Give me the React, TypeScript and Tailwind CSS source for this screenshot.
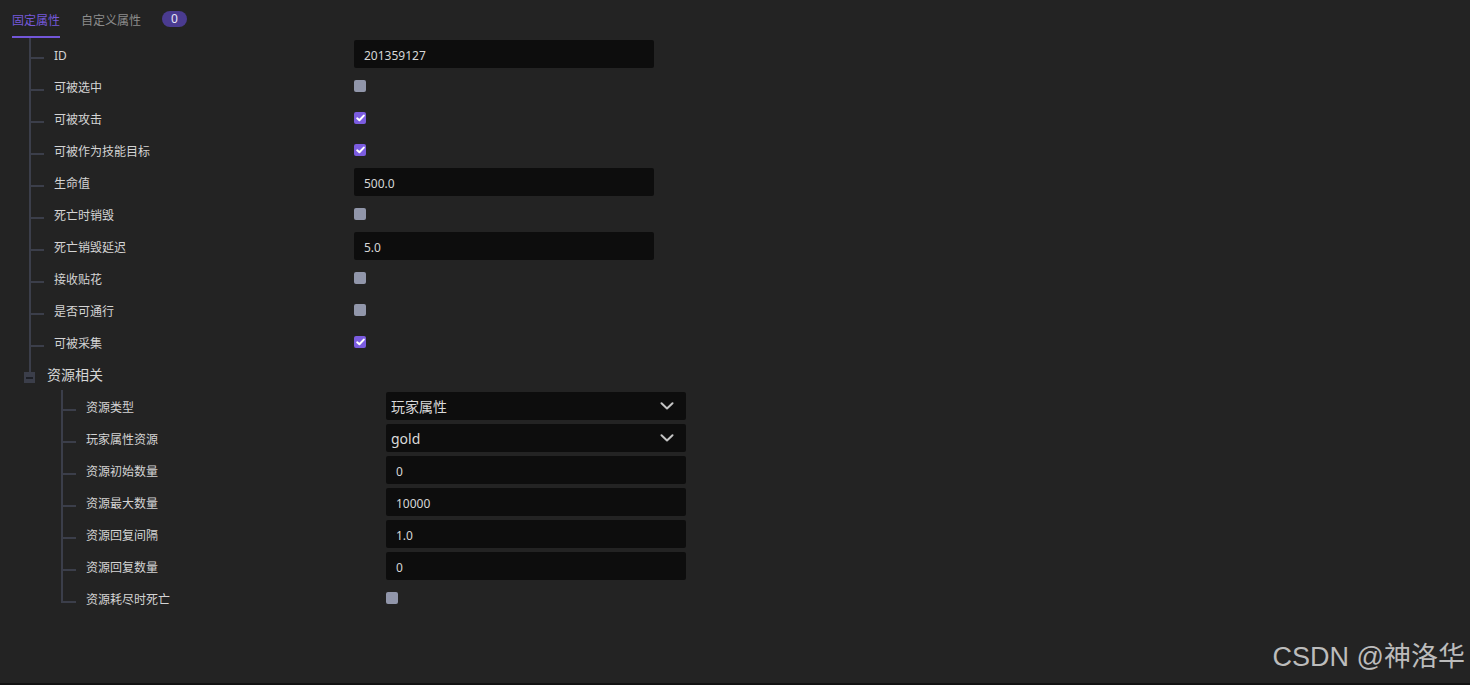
import React from "react"

const LINE = "border-[#3b3e4a]"

type Field =
  | { label: string; kind: "input"; value: string }
  | { label: string; kind: "check"; checked: boolean }
  | { label: string; kind: "select"; value: string }

const fixedFields: Field[] = [
  { label: "ID", kind: "input", value: "201359127" },
  { label: "可被选中", kind: "check", checked: false },
  { label: "可被攻击", kind: "check", checked: true },
  { label: "可被作为技能目标", kind: "check", checked: true },
  { label: "生命值", kind: "input", value: "500.0" },
  { label: "死亡时销毁", kind: "check", checked: false },
  { label: "死亡销毁延迟", kind: "input", value: "5.0" },
  { label: "接收贴花", kind: "check", checked: false },
  { label: "是否可通行", kind: "check", checked: false },
  { label: "可被采集", kind: "check", checked: true },
]

const resourceFields: Field[] = [
  { label: "资源类型", kind: "select", value: "玩家属性" },
  { label: "玩家属性资源", kind: "select", value: "gold" },
  { label: "资源初始数量", kind: "input", value: "0" },
  { label: "资源最大数量", kind: "input", value: "10000" },
  { label: "资源回复间隔", kind: "input", value: "1.0" },
  { label: "资源回复数量", kind: "input", value: "0" },
  { label: "资源耗尽时死亡", kind: "check", checked: false },
]

function Checkbox({ checked }: { checked: boolean }) {
  if (!checked) return <div className="w-3 h-3 rounded-[2px] bg-[#9196aa]" />
  return (
    <div className="w-3 h-3 rounded-[2px] bg-[#7b5ce0] flex items-center justify-center">
      <svg width="9" height="8" viewBox="0 0 9 8">
        <path d="M1.2 4.3 L3.4 6.3 L7.8 1.6" fill="none" stroke="#ffffff" strokeWidth="2" strokeLinecap="round" strokeLinejoin="round" />
      </svg>
    </div>
  )
}

function Control({ field }: { field: Field }) {
  if (field.kind === "check") return <Checkbox checked={field.checked} />
  if (field.kind === "select")
    return (
      <div className="w-[300px] h-[28px] rounded-[2px] bg-[#0d0d0d] flex items-center justify-between pl-[5px] pr-[12px] text-[14px] text-[#dadada]">
        <span>{field.value}</span>
        <svg width="14" height="8" viewBox="0 0 14 8">
          <path d="M1.5 1.2 L7 6.5 L12.5 1.2" fill="none" stroke="#c4c4c4" strokeWidth="2" strokeLinecap="round" strokeLinejoin="round" />
        </svg>
      </div>
    )
  return (
    <div className="w-[300px] h-[28px] rounded-[2px] bg-[#0d0d0d] flex items-center px-[10px] pt-[3px] text-[12px] text-[#d6d6d6]">
      {field.value}
    </div>
  )
}

function Branch({ last }: { last?: boolean }) {
  // tree connector: ├ or └
  return (
    <div className="w-[15px] self-stretch flex flex-col shrink-0">
      <div className={`h-[21px] border-l-2 border-b-2 ${LINE}`} />
      <div className={`flex-1 ${last ? "" : `border-l-2 ${LINE}`}`} />
    </div>
  )
}

function FieldRow({ field, last }: { field: Field; last?: boolean }) {
  return (
    <div className="flex h-8">
      <Branch last={last} />
      <div className="ml-[10px] w-[300px] flex items-center pt-[3px] text-[12px] text-[#d4d4d4]">{field.label}</div>
      <div className="flex items-center">
        <Control field={field} />
      </div>
    </div>
  )
}

export default function App() {
  return (
    <main
      className="relative h-[685px] w-full bg-[#232323] border-b-2 border-[#121212] overflow-hidden"
      style={{ fontFamily: '"Noto Sans", "Noto Sans CJK SC", sans-serif' }}
    >
      {/* Tabs */}
      <div className="flex items-center h-[38px] pl-[12px] text-[12px]">
        <div className="h-full flex items-center pt-[5px] border-b-2 border-[#7256d8] text-[#7559da]">固定属性</div>
        <div className="ml-[21px] pt-[3px] text-[#8c8c8c]">自定义属性</div>
        <div className="ml-[21px] w-[25px] h-4 rounded-full bg-[#4a3b90] flex items-center justify-center text-[#e8e6f5]">
          0
        </div>
      </div>

      {/* Fixed properties tree */}
      <div className="pl-[29px]">
        {fixedFields.map((f) => (
          <FieldRow key={f.label} field={f} />
        ))}
      </div>

      {/* Group: 资源相关 */}
      <div className="flex h-8 pl-[24px]">
        <div className="w-[11px] flex flex-col items-center">
          <div className="w-[2px] h-[14px] bg-[#3b3e4a]" />
          <div className="w-[11px] h-[11px] bg-[#3b3e4a] flex items-center justify-center">
            <div className="w-[7px] h-[2px] bg-[#1d1f26]" />
          </div>
        </div>
        <div className="ml-[12px] flex items-center pt-[1px] text-[14px] text-[#d6d6d6]">资源相关</div>
      </div>

      <div className="pl-[61px]">
        {resourceFields.map((f, i) => (
          <FieldRow key={f.label} field={f} last={i === resourceFields.length - 1} />
        ))}
      </div>

      {/* Watermark */}
      <div
        className="absolute right-[5px] bottom-[6px] text-[27px] text-[#bcbcbc]"
        style={{ fontFamily: '"Liberation Sans", "Noto Sans CJK SC", sans-serif' }}
      >
        CSDN @神洛华
      </div>
    </main>
  )
}
